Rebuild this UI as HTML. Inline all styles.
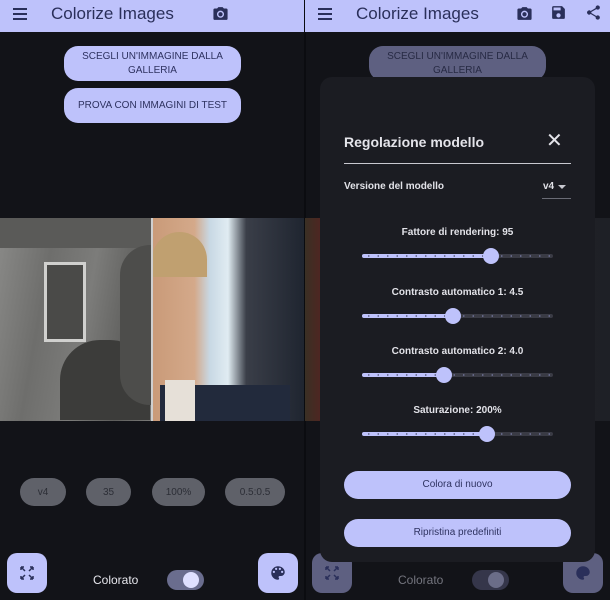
<!DOCTYPE html>
<html><head><meta charset="utf-8"><style>
*{margin:0;padding:0;box-sizing:border-box}
body{width:610px;height:600px;background:#121318;position:relative;overflow:hidden;font-family:"Liberation Sans",sans-serif}
.a{position:absolute}
.bar{top:0;height:32px;background:#bec2fb;width:305px}
.title{font-size:17px;color:#2a2f5a;top:4px}
.btn{background:#bec2fb;color:#2e3260;border-radius:14px;font-size:10px;text-align:center;display:flex;align-items:center;justify-content:center;line-height:14px}
.chip{background:#5f6169;color:#2c2e36;border-radius:14px;font-size:10px;display:flex;align-items:center;justify-content:center;top:478px;height:28px}
.fab{width:40px;height:40px;border-radius:10px;background:#bec2fb;top:553px;display:flex;align-items:center;justify-content:center}
.lbl{font-size:10px;font-weight:bold;color:#e2e2e8;width:275px;text-align:center;left:320px}
.trk{left:362px;width:191px;height:4px;border-radius:2px;background:#3a3b45}
.fill{height:4px;border-radius:2px;background:#bec2fb;position:absolute;left:0;top:0}
.dots{position:absolute;left:2px;right:2px;top:1px;height:2px;background-image:radial-gradient(circle,#6a6d90 0.8px,transparent 1px);background-size:9.5px 2px}
.th{width:16px;height:16px;border-radius:50%;background:#bec2fb;position:absolute;top:-6px}
</style></head><body>
<!-- LEFT SCREEN -->
<div class="a bar" style="left:0"></div>
<div class="a" style="left:13px;top:8px;width:14px;height:2px;background:#2a2f5a;box-shadow:0 5px 0 #2a2f5a,0 10px 0 #2a2f5a"></div>
<div class="a title" style="left:51px">Colorize Images</div>
<svg class="a" style="left:212px;top:5px" width="17" height="17" viewBox="0 0 24 24"><path fill="#2a2f5a" d="M9 3 7.2 5H4a2 2 0 0 0-2 2v12a2 2 0 0 0 2 2h16a2 2 0 0 0 2-2V7a2 2 0 0 0-2-2h-3.2L15 3zm3 5a5 5 0 1 1 0 10 5 5 0 0 1 0-10zm0 2a3 3 0 1 0 0 6 3 3 0 0 0 0-6z"/></svg>
<div class="a btn" style="left:64px;top:46px;width:177px;height:35px">SCEGLI UN'IMMAGINE DALLA<br>GALLERIA</div>
<div class="a btn" style="left:64px;top:88px;width:177px;height:35px">PROVA CON IMMAGINI DI TEST</div>
<div class="a" style="left:0;top:218px;width:152px;height:203px;background:linear-gradient(100deg,#8a8a88 0%,#6e6e6c 30%,#7c7c7a 55%,#5e5e5c 80%,#7a7a78 100%)"></div>
<div class="a" style="left:0;top:218px;width:152px;height:30px;background:#5a5a58"></div>
<div class="a" style="left:44px;top:262px;width:42px;height:80px;border:3px solid #d0d0ce;background:#4a4a48"></div>
<div class="a" style="left:60px;top:340px;width:90px;height:80px;background:#3c3c3a;border-radius:40px 40px 0 0"></div>
<div class="a" style="left:120px;top:245px;width:32px;height:160px;background:#4d4d4b;border-radius:30px 0 0 30px"></div>
<div class="a" style="left:152px;top:218px;width:152px;height:203px;background:linear-gradient(90deg,#c99a78 0%,#d4a98a 28%,#c8d8e4 38%,#e0ecf2 50%,#3a3e48 62%,#1f2530 100%)"></div>
<div class="a" style="left:152px;top:232px;width:55px;height:45px;background:#c0a070;border-radius:28px 28px 0 0"></div>
<div class="a" style="left:160px;top:385px;width:130px;height:36px;background:#222a3c"></div>
<div class="a" style="left:165px;top:380px;width:30px;height:41px;background:#e6e0d8"></div>
<div class="a" style="left:151px;top:218px;width:2px;height:203px;background:#cfcfcf"></div>
<div class="a chip" style="left:20px;width:46px">v4</div>
<div class="a chip" style="left:86px;width:45px">35</div>
<div class="a chip" style="left:152px;width:53px">100%</div>
<div class="a chip" style="left:225px;width:60px">0.5:0.5</div>
<div class="a fab" style="left:7px"><svg width="14" height="14" viewBox="0 0 14 14" fill="none" stroke="#2a2f5a" stroke-width="1.5"><path d="M1 1l4 4M1 1h3M1 1v3M13 1l-4 4M13 1h-3M13 1v3M1 13l4-4M1 13h3M1 13v-3M13 13l-4-4M13 13h-3M13 13v-3"/></svg></div>
<div class="a" style="left:93px;top:573px;color:#e6e6ec;font-size:12px">Colorato</div>
<div class="a" style="left:167px;top:570px;width:37px;height:20px;border-radius:10px;background:#6a6d8e"></div>
<div class="a" style="left:183px;top:572px;width:16px;height:16px;border-radius:50%;background:#dfe0ff"></div>
<div class="a fab" style="left:258px"><svg width="18" height="18" viewBox="0 0 24 24"><path fill="#2a2f5a" d="M12 3a9 9 0 0 0 0 18c.8 0 1.5-.7 1.5-1.5 0-.4-.1-.7-.4-1-.2-.3-.4-.6-.4-1 0-.8.7-1.5 1.5-1.5H16a5 5 0 0 0 5-5c0-4.4-4-8-9-8zM6.5 12a1.5 1.5 0 1 1 0-3 1.5 1.5 0 0 1 0 3zm3-4a1.5 1.5 0 1 1 0-3 1.5 1.5 0 0 1 0 3zm5 0a1.5 1.5 0 1 1 0-3 1.5 1.5 0 0 1 0 3zm3 4a1.5 1.5 0 1 1 0-3 1.5 1.5 0 0 1 0 3z"/></svg></div>

<!-- RIGHT SCREEN -->
<div class="a" style="left:304px;top:0;width:2px;height:600px;background:#0b0c10"></div>
<div class="a bar" style="left:305px"></div>
<div class="a" style="left:318px;top:8px;width:14px;height:2px;background:#2a2f5a;box-shadow:0 5px 0 #2a2f5a,0 10px 0 #2a2f5a"></div>
<div class="a title" style="left:356px">Colorize Images</div>
<svg class="a" style="left:516px;top:5px" width="17" height="17" viewBox="0 0 24 24"><path fill="#2a2f5a" d="M9 3 7.2 5H4a2 2 0 0 0-2 2v12a2 2 0 0 0 2 2h16a2 2 0 0 0 2-2V7a2 2 0 0 0-2-2h-3.2L15 3zm3 5a5 5 0 1 1 0 10 5 5 0 0 1 0-10zm0 2a3 3 0 1 0 0 6 3 3 0 0 0 0-6z"/></svg>
<svg class="a" style="left:550px;top:4px" width="17" height="17" viewBox="0 0 24 24"><path fill="#2a2f5a" d="M17 3H5a2 2 0 0 0-2 2v14a2 2 0 0 0 2 2h14a2 2 0 0 0 2-2V7zm-5 16a3 3 0 1 1 0-6 3 3 0 0 1 0 6zm3-10H5V5h10z"/></svg>
<svg class="a" style="left:585px;top:4px" width="17" height="17" viewBox="0 0 24 24"><path fill="#2a2f5a" d="M18 16.1c-.8 0-1.4.3-2 .8l-7.1-4.2c.1-.2.1-.5.1-.7s0-.5-.1-.7L16 7.2A3 3 0 1 0 15 5c0 .2 0 .5.1.7L8 9.8A3 3 0 1 0 8 14.2l7.1 4.2c-.1.2-.1.4-.1.6a3 3 0 1 0 3-2.9z"/></svg>
<div class="a btn" style="left:369px;top:46px;width:177px;height:35px;background:#5e6081;color:#272a44">SCEGLI UN'IMMAGINE DALLA<br>GALLERIA</div>
<div class="a" style="left:305px;top:218px;width:305px;height:203px;background:linear-gradient(90deg,#3a3024,#5a2020 8%,#28282c 40%,#1e2026 100%)"></div>
<div class="a fab" style="left:312px;background:#5e6081"><svg width="14" height="14" viewBox="0 0 14 14" fill="none" stroke="#2a2f5a" stroke-width="1.5"><path d="M1 1l4 4M1 1h3M1 1v3M13 1l-4 4M13 1h-3M13 1v3M1 13l4-4M1 13h3M1 13v-3M13 13l-4-4M13 13h-3M13 13v-3"/></svg></div>
<div class="a" style="left:398px;top:573px;color:#74757e;font-size:12px">Colorato</div>
<div class="a" style="left:472px;top:570px;width:37px;height:20px;border-radius:10px;background:#35364a"></div>
<div class="a" style="left:488px;top:572px;width:16px;height:16px;border-radius:50%;background:#6b6d88"></div>
<div class="a fab" style="left:563px;background:#5e6081"><svg width="18" height="18" viewBox="0 0 24 24"><path fill="#2a2f5a" d="M12 3a9 9 0 0 0 0 18c.8 0 1.5-.7 1.5-1.5 0-.4-.1-.7-.4-1-.2-.3-.4-.6-.4-1 0-.8.7-1.5 1.5-1.5H16a5 5 0 0 0 5-5c0-4.4-4-8-9-8z"/></svg></div>

<!-- DIALOG -->
<div class="a" style="left:320px;top:77px;width:275px;height:485px;background:#1b1c22;border-radius:12px"></div>
<div class="a" style="left:344px;top:134px;font-size:14px;font-weight:bold;color:#e4e4ea">Regolazione modello</div>
<div class="a" style="left:546px;top:128px;font-size:20px;color:#e4e4ea">✕</div>
<div class="a" style="left:344px;top:163px;width:227px;height:1px;background:#c8c8d0"></div>
<div class="a" style="left:344px;top:181px;font-size:10px;font-weight:bold;color:#e2e2e8">Versione del modello</div>
<div class="a" style="left:543px;top:181px;font-size:10px;font-weight:bold;color:#e2e2e8">v4</div>
<div class="a" style="left:558px;top:185px;border-left:4px solid transparent;border-right:4px solid transparent;border-top:4px solid #c8c8d0"></div>
<div class="a" style="left:542px;top:198px;width:29px;height:1px;background:#6a6b75"></div>

<div class="a lbl" style="top:227px">Fattore di rendering: 95</div>
<div class="a trk" style="top:254px"><div class="fill" style="width:129px"></div><div class="dots"></div><div class="th" style="left:121px"></div></div>
<div class="a lbl" style="top:287px">Contrasto automatico 1: 4.5</div>
<div class="a trk" style="top:314px"><div class="fill" style="width:91px"></div><div class="dots"></div><div class="th" style="left:83px"></div></div>
<div class="a lbl" style="top:346px">Contrasto automatico 2: 4.0</div>
<div class="a trk" style="top:373px"><div class="fill" style="width:82px"></div><div class="dots"></div><div class="th" style="left:74px"></div></div>
<div class="a lbl" style="top:405px">Saturazione: 200%</div>
<div class="a trk" style="top:432px"><div class="fill" style="width:125px"></div><div class="dots"></div><div class="th" style="left:117px"></div></div>

<div class="a btn" style="left:344px;top:471px;width:227px;height:28px">Colora di nuovo</div>
<div class="a btn" style="left:344px;top:519px;width:227px;height:28px">Ripristina predefiniti</div>
</body></html>
